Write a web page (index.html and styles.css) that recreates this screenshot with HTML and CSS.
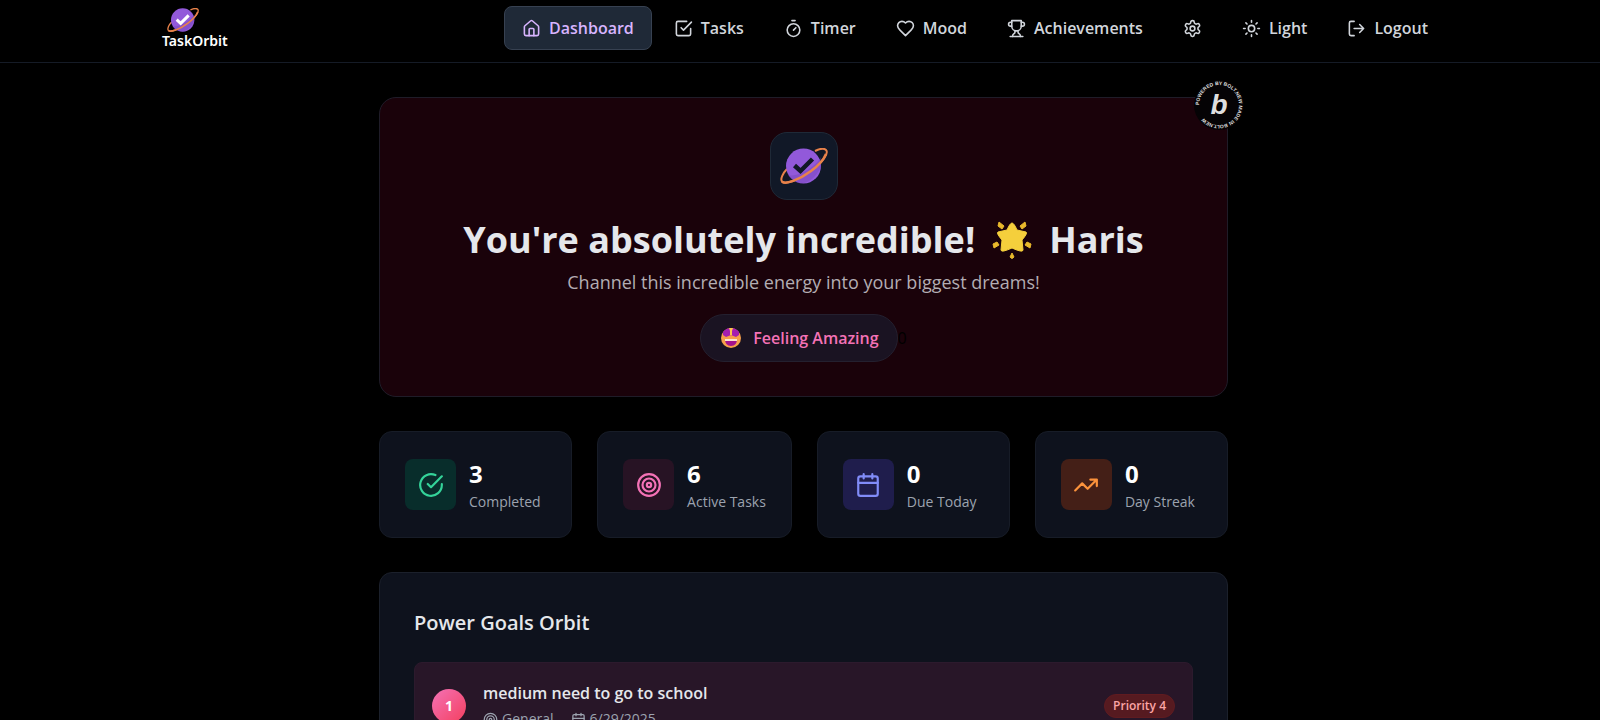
FILE: index.html
```html
<!DOCTYPE html>
<html lang="en">
<head>
    <meta charset="UTF-8">
    <meta name="viewport" content="width=device-width, initial-scale=1.0">
    <title>TaskOrbit</title>
    <link rel="stylesheet" href="styles.css">
</head>
<body>
    <!-- Shared icons -->
    <svg class="icon-defs" aria-hidden="true">
        <symbol id="icon-calendar" viewBox="0 0 24 24">
            <path d="M8 2v4M16 2v4M3 10h18"/>
            <rect x="3" y="4" width="18" height="18" rx="2"/>
        </symbol>
        <symbol id="icon-target" viewBox="0 0 24 24">
            <circle cx="12" cy="12" r="10"/>
            <circle cx="12" cy="12" r="6"/>
            <circle cx="12" cy="12" r="2"/>
        </symbol>
        <symbol id="icon-planet" viewBox="0 0 48 36">
            <path d="M7 21C3 25 0 31 2 33.500C5 37 19 32 31 23C43 14 49 5 46 2C44 0 39 1 35 3" fill="none" stroke="#e8824a" stroke-width="2"/>
            <circle cx="23.500" cy="18" r="17.500" fill="#9259da"/>
            <path d="M8 27C14 29 24 25 33 18C37 15 39 12 41 9L41 19C36 29 29 35 22 35C16 35 11 32 8 27Z" fill="#6d3fae" opacity=".35"/>
            <path d="M2 33.500C5 37 19 32 31 23C38 18 44 11 46 6" fill="none" stroke="#e8824a" stroke-width="2.500"/>
            <path d="M14.500 17.500L20.500 23L32.500 11" fill="none" stroke="currentColor" stroke-width="4.500"/>
        </symbol>
    </svg>

    <header class="header">
        <div class="header-inner">
            <a class="logo" href="#">
                <svg class="logo-icon"><use href="#icon-planet"/></svg>
                <span>TaskOrbit</span>
            </a>
            <nav class="nav">
                <a class="nav-item active" href="#">
                    <svg class="icon" viewBox="0 0 24 24"><path d="M3 10a2 2 0 0 1 .7-1.500l7-6a2 2 0 0 1 2.600 0l7 6a2 2 0 0 1 .7 1.500v9a2 2 0 0 1-2 2H5a2 2 0 0 1-2-2z"/><path d="M15 21v-8a1 1 0 0 0-1-1h-4a1 1 0 0 0-1 1v8"/></svg>
                    Dashboard
                </a>
                <a class="nav-item" href="#">
                    <svg class="icon" viewBox="0 0 24 24"><path d="m9 11 3 3L22 4"/><path d="M21 12v7a2 2 0 0 1-2 2H5a2 2 0 0 1-2-2V5a2 2 0 0 1 2-2h11"/></svg>
                    Tasks
                </a>
                <a class="nav-item" href="#">
                    <svg class="icon" viewBox="0 0 24 24"><path d="M10 2h4M12 14l3-3"/><circle cx="12" cy="14" r="8"/></svg>
                    Timer
                </a>
                <a class="nav-item" href="#">
                    <svg class="icon" viewBox="0 0 24 24"><path d="M19 14c1.490-1.460 3-3.210 3-5.500A5.500 5.500 0 0 0 16.500 3c-1.760 0-3 .5-4.500 2-1.500-1.500-2.740-2-4.500-2A5.500 5.500 0 0 0 2 8.500c0 2.300 1.500 4.050 3 5.500l7 7Z"/></svg>
                    Mood
                </a>
                <a class="nav-item" href="#">
                    <svg class="icon" viewBox="0 0 24 24"><path d="M6 9H4.500a2.500 2.500 0 0 1 0-5H6M18 9h1.500a2.500 2.500 0 0 0 0-5H18M4 22h16"/><path d="M10 14.660V17c0 .55-.47.98-.97 1.210C7.850 18.750 7 20.240 7 22M14 14.660V17c0 .55.470.98.970 1.210C16.150 18.750 17 20.240 17 22M18 2H6v7a6 6 0 0 0 12 0V2Z"/></svg>
                    Achievements
                </a>
                <button class="nav-item" type="button" aria-label="Settings">
                    <svg class="icon" viewBox="0 0 24 24"><path d="M12.220 2h-.44a2 2 0 0 0-2 2v.18a2 2 0 0 1-1 1.730l-.43.25a2 2 0 0 1-2 0l-.15-.08a2 2 0 0 0-2.730.73l-.22.38a2 2 0 0 0 .73 2.730l.15.1a2 2 0 0 1 1 1.720v.51a2 2 0 0 1-1 1.740l-.15.09a2 2 0 0 0-.73 2.730l.22.38a2 2 0 0 0 2.730.73l.15-.08a2 2 0 0 1 2 0l.43.25a2 2 0 0 1 1 1.730V20a2 2 0 0 0 2 2h.44a2 2 0 0 0 2-2v-.18a2 2 0 0 1 1-1.730l.43-.25a2 2 0 0 1 2 0l.15.08a2 2 0 0 0 2.730-.73l.22-.39a2 2 0 0 0-.73-2.730l-.15-.08a2 2 0 0 1-1-1.740v-.5a2 2 0 0 1 1-1.740l.15-.09a2 2 0 0 0 .73-2.730l-.22-.38a2 2 0 0 0-2.730-.73l-.15.08a2 2 0 0 1-2 0l-.43-.25a2 2 0 0 1-1-1.730V4a2 2 0 0 0-2-2z"/><circle cx="12" cy="12" r="3"/></svg>
                </button>
                <button class="nav-item" type="button">
                    <svg class="icon" viewBox="0 0 24 24"><circle cx="12" cy="12" r="4"/><path d="M12 2v2M12 20v2M4.930 4.930l1.410 1.410M17.660 17.660l1.410 1.410M2 12h2M20 12h2M6.340 17.660l-1.410 1.410M19.070 4.930l-1.410 1.410"/></svg>
                    Light
                </button>
                <button class="nav-item" type="button">
                    <svg class="icon" viewBox="0 0 24 24"><path d="M9 21H5a2 2 0 0 1-2-2V5a2 2 0 0 1 2-2h4M16 17l5-5-5-5M21 12H9"/></svg>
                    Logout
                </button>
            </nav>
        </div>
    </header>

    <main class="main">
        <section class="hero">
            <a class="bolt-badge" href="#" aria-label="Powered by Bolt.new">
                <svg viewBox="0 0 50 50">
                    <defs><path id="ring" d="M5 25a20 20 0 0 1 40 0a20 20 0 0 1-40 0"/></defs>
                    <circle cx="25" cy="25" r="25" fill="#050305"/>
                    <text class="ring-text"><textPath href="#ring">POWERED BY BOLT.NEW MADE IN BOLT.NEW</textPath></text>
                    <text class="badge-letter" x="25" y="34" text-anchor="middle">b</text>
                </svg>
            </a>
            <div class="hero-icon">
                <svg><use href="#icon-planet"/></svg>
            </div>
            <h1>
                <span>You're absolutely incredible!</span>
                <svg class="star" viewBox="0 0 40 40" role="img" aria-label="Glowing star">
                    <g fill="#e9b92c" stroke="#e9b92c" stroke-linejoin="round">
                        <path d="M7 2l5 4l-2 3l-4-3zM33 2l-5 4l2 3l4-3zM1 24l4-2l2 3l-5 3zM39 24l-4-2l-2 3l5 3zM20 33l2 4q-2 3-4 0z"/>
                    </g>
                    <path d="M20 3Q22 3 25 10L34 12Q36 13 30 20L31 30Q31 33 20 28Q9 33 9 30L10 20Q4 13 6 12L15 10Q18 3 20 3z" fill="#f5cf3c" stroke="#f5cf3c" stroke-linejoin="round"/>
                </svg>
                <span>Haris</span>
            </h1>
            <p class="hero-text">Channel this incredible energy into your biggest dreams!</p>
            <div class="mood-row">
                <div class="mood">
                    <svg class="mood-face" viewBox="0 0 20 20" role="img" aria-label="Star-struck">
                        <circle cx="10" cy="10" r="10" fill="#f7a04b"/>
                        <path d="M2 4Q5 0 10 0T18 4L18 7L15 9L10 7L5 9L2 7z" fill="#a51fb0"/>
                        <path d="M8 0h4l-1 3v4h-2V3z" fill="#ffc44d"/>
                        <path d="M4 11h12q0 7-6 7t-6-7z" fill="#a4128d"/>
                        <path d="M4 11h12v2H4z" fill="#ffe2cf"/>
                    </svg>
                    Feeling Amazing
                </div>
                <span class="count">0</span>
            </div>
        </section>

        <section class="stats">
            <div class="stat">
                <div class="stat-icon green"><svg class="icon" viewBox="0 0 24 24"><path d="M22 11.080V12a10 10 0 1 1-5.930-9.140M9 11l3 3L22 4"/></svg></div>
                <div>
                    <div class="stat-value">3</div>
                    <div class="stat-label">Completed</div>
                </div>
            </div>
            <div class="stat">
                <div class="stat-icon pink"><svg class="icon"><use href="#icon-target"/></svg></div>
                <div>
                    <div class="stat-value">6</div>
                    <div class="stat-label">Active Tasks</div>
                </div>
            </div>
            <div class="stat">
                <div class="stat-icon indigo"><svg class="icon"><use href="#icon-calendar"/></svg></div>
                <div>
                    <div class="stat-value">0</div>
                    <div class="stat-label">Due Today</div>
                </div>
            </div>
            <div class="stat">
                <div class="stat-icon orange"><svg class="icon" viewBox="0 0 24 24"><path d="M22 7l-8.500 8.500-5-5L2 17M16 7h6v6"/></svg></div>
                <div>
                    <div class="stat-value">0</div>
                    <div class="stat-label">Day Streak</div>
                </div>
            </div>
        </section>

        <section class="goals">
            <h2>Power Goals Orbit</h2>
            <div class="goal">
                <div class="goal-number">1</div>
                <div class="goal-info">
                    <h3>medium need to go to school</h3>
                    <div class="goal-meta">
                        <span><svg class="icon"><use href="#icon-target"/></svg>General</span>
                        <span><svg class="icon"><use href="#icon-calendar"/></svg>6/29/2025</span>
                    </div>
                </div>
                <span class="priority">Priority 4</span>
            </div>
        </section>
    </main>
</body>
</html>
```
FILE: styles.css
```css
* {
    box-sizing: border-box;
}
body {
    height: 100vh;
    margin: 0;
    padding-left: 7px;
    overflow: hidden;
    background-color: #000000;
    color: #e5e7eb;
    font-family: "Open Sans", "Noto Sans", sans-serif;
}
h1, h2, h3, p {
    margin: 0;
}
a {
    color: inherit;
    text-decoration: none;
}
.icon-defs {
    display: none;
}
.icon {
    width: 19px;
    height: 19px;
    flex-shrink: 0;
    fill: none;
    stroke: currentColor;
    stroke-width: 2;
    stroke-linecap: round;
    stroke-linejoin: round;
}

/* Header */
.header {
    margin-left: -7px;
    padding: 6px 0 12px 8px;
    border-bottom: 1px solid #151b26;
}
.header-inner {
    display: flex;
    justify-content: space-between;
    align-items: center;
    max-width: 1284px;
    margin: 0 auto;
}
.logo {
    display: flex;
    flex-direction: column;
    align-items: center;
    padding-top: 2px;
    color: #ffffff;
    font-family: "Noto Sans", sans-serif;
    font-size: 14px;
    font-weight: 600;
    line-height: 18px;
}
.logo-icon {
    width: 32px;
    height: 24px;
    margin-right: 24px;
}
.nav {
    display: flex;
    gap: 4px;
}
.nav-item {
    display: flex;
    align-items: center;
    gap: 8px;
    height: 44px;
    padding: 0 17px;
    border: 1px solid transparent;
    border-radius: 8px;
    background: none;
    color: #d1d5db;
    font-family: inherit;
    font-size: 16px;
    font-weight: 600;
    cursor: pointer;
}
.nav-item.active {
    border-color: #374151;
    background-color: #1f2937;
    color: #d8b4fe;
}

/* Page */
.main {
    display: flex;
    flex-direction: column;
    gap: 34px;
    max-width: 849px;
    margin: 0 auto;
    padding: 34px 0;
}

/* Hero */
.hero {
    position: relative;
    display: flex;
    flex-direction: column;
    align-items: center;
    padding: 34px;
    border: 1px solid #1f1c28;
    border-radius: 17px;
    background-color: #1a020a;
}
.bolt-badge {
    position: absolute;
    top: -18px;
    right: -17px;
    width: 50px;
    height: 50px;
}
.bolt-badge svg {
    display: block;
    overflow: visible;
}
.ring-text {
    fill: #dedede;
    font-family: "Liberation Sans", Arial, sans-serif;
    font-size: 5px;
    font-weight: 700;
}
.badge-letter {
    fill: #dedede;
    font-family: "Liberation Sans", Arial, sans-serif;
    font-size: 28px;
    font-style: italic;
    font-weight: 700;
}
.hero-icon {
    display: flex;
    justify-content: center;
    align-items: center;
    width: 68px;
    height: 68px;
    margin-bottom: 16px;
    border: 1px solid #1f2937;
    border-radius: 17px;
    background-color: #111827;
    color: #111827;
}
.hero-icon svg {
    width: 48px;
    height: 36px;
}
.hero h1 {
    display: flex;
    align-items: center;
    gap: 17px;
    font-size: 36px;
    font-weight: 700;
    line-height: 48px;
}
.star {
    width: 40px;
    height: 40px;
}
.hero-text {
    margin: 4px 0 18px;
    color: #b3adb3;
    font-size: 18px;
    line-height: 28px;
}
.mood-row {
    display: flex;
    align-items: center;
}
.mood {
    display: flex;
    align-items: center;
    gap: 12px;
    height: 48px;
    padding: 0 18px 0 20px;
    border: 1px solid #24202f;
    border-radius: 24px;
    background-color: #1a1322;
    color: #f472b6;
    font-size: 16px;
    font-weight: 600;
}
.mood-face {
    width: 20px;
    height: 20px;
}
.count {
    color: #000000;
    font-size: 16px;
}

/* Stats */
.stats {
    display: grid;
    grid-template-columns: repeat(4, 1fr);
    gap: 25px;
}
.stat {
    display: flex;
    align-items: center;
    gap: 13px;
    padding: 25px;
    border: 1px solid #171c27;
    border-radius: 13px;
    background-color: #0e121d;
}
.stat-icon {
    display: flex;
    justify-content: center;
    align-items: center;
    width: 51px;
    height: 51px;
    border-radius: 8px;
}
.stat-icon .icon {
    width: 26px;
    height: 26px;
}
.green {
    background-color: #082d2b;
    color: #34d399;
}
.pink {
    background-color: #271324;
    color: #f472b6;
}
.indigo {
    background-color: #1f1d4c;
    color: #818cf8;
}
.orange {
    background-color: #441f17;
    color: #fb923c;
}
.stat-value {
    color: #ffffff;
    font-size: 24px;
    font-weight: 700;
    line-height: 34px;
}
.stat-label {
    color: #9ca3af;
    font-size: 14px;
    line-height: 21px;
    white-space: nowrap;
}

/* Goals */
.goals {
    padding: 34px;
    border: 1px solid #1b202b;
    border-radius: 13px;
    background-color: #0e121d;
}
.goals h2 {
    margin-bottom: 24px;
    font-size: 20px;
    font-weight: 600;
    line-height: 31px;
}
.goal {
    display: flex;
    align-items: center;
    gap: 17px;
    padding: 17px;
    border: 1px solid #2c1a2d;
    border-radius: 8px;
    background-color: #281628;
}
.goal-number {
    width: 34px;
    height: 34px;
    border-radius: 50%;
    background: linear-gradient(135deg, #f472b6, #f43f5e);
    color: #ffffff;
    font-size: 14px;
    font-weight: 700;
    line-height: 34px;
    text-align: center;
}
.goal-info {
    flex: 1;
}
.goal h3 {
    font-size: 16px;
    font-weight: 600;
    line-height: 26px;
}
.goal-meta {
    display: flex;
    gap: 17px;
    color: #9ca3af;
    font-size: 14px;
    line-height: 26px;
}
.goal-meta span {
    display: flex;
    align-items: center;
    gap: 4px;
}
.goal-meta .icon {
    width: 15px;
    height: 15px;
}
.priority {
    padding: 0 8px;
    border: 1px solid #5f1b20;
    border-radius: 12px;
    background-color: #561a20;
    color: #fca5a5;
    font-size: 12px;
    font-weight: 600;
    line-height: 22px;
}
```
